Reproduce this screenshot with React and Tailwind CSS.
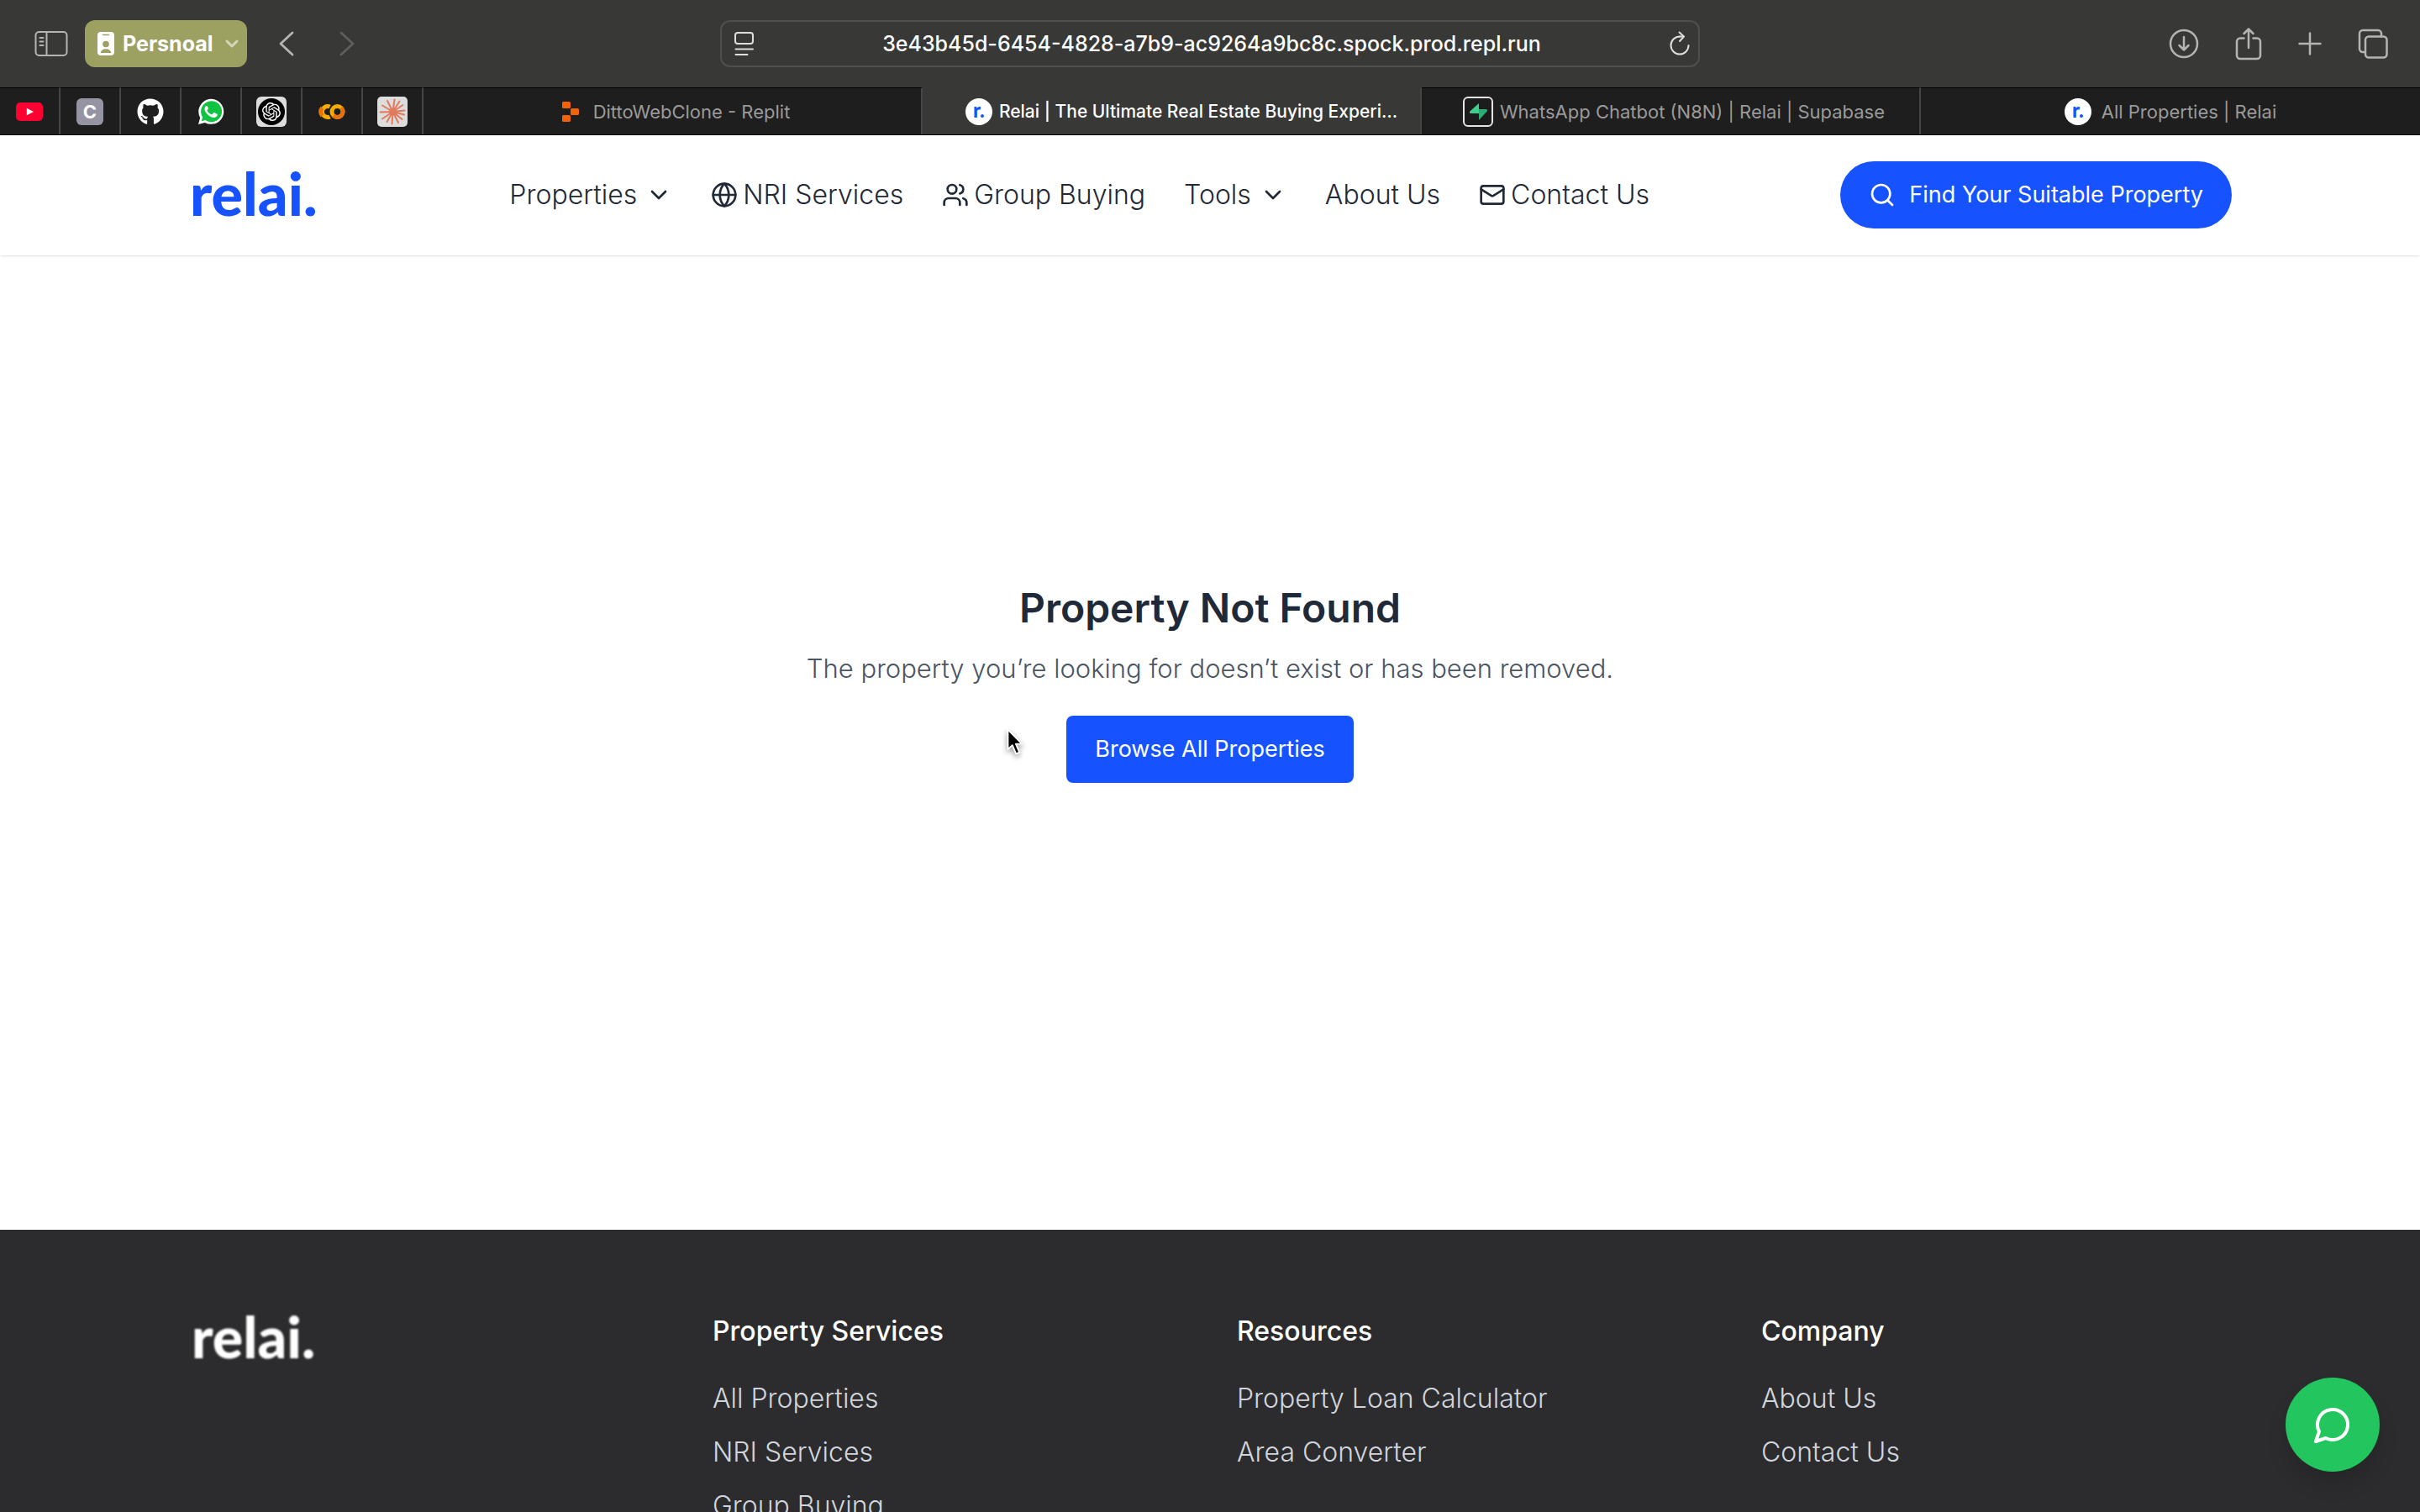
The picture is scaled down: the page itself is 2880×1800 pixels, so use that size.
import React from 'react';
import { ChevronDown, Globe, Users, Mail, Search } from 'lucide-react';
import { SiOpenai } from 'react-icons/si';
import { FaGithub } from 'react-icons/fa';

const line = {
  fill: 'none',
  stroke: 'currentColor',
  strokeLinecap: 'round',
  strokeLinejoin: 'round',
};

function SidebarIcon() {
  return (
    <svg width="40" height="32" viewBox="0 0 40 32" {...line} strokeWidth="2">
      <rect x="1.5" y="2" width="37" height="28" rx="4" />
      <path d="M14.5 2v28M6.5 9h4M6.5 13.500h4M6.500 18h4" />
    </svg>
  );
}

function BadgeIcon() {
  return (
    <svg width="20" height="28" viewBox="0 0 20 28">
      <rect width="20" height="28" rx="4" fill="#fff" />
      <path d="M6.500 3.500h7" stroke="#9ca162" strokeWidth="1.500" strokeLinecap="round" />
      <circle cx="10" cy="14.500" r="3.800" fill="#9ca162" />
      <path d="M3.500 25c.6-3.200 3.200-4.800 6.500-4.800s5.900 1.600 6.500 4.800z" fill="#9ca162" />
    </svg>
  );
}

function ReaderIcon() {
  return (
    <svg width="24" height="30" viewBox="0 0 24 30" {...line} strokeWidth="2">
      <rect x="1" y="2" width="21" height="13" rx="3" />
      <path d="M1.500 21.500h20.500M1.500 28h14" />
    </svg>
  );
}

function ReloadIcon() {
  return (
    <svg width="26" height="30" viewBox="0 0 26 30" {...line} strokeWidth="2">
      <path d="M13 6.500A10.500 10.500 0 1 0 23.500 17" />
      <path d="M12.500 1.500l5.500 5-5 5.500" />
      <path d="M13 6.500h4.500" />
    </svg>
  );
}

function DownloadIcon() {
  return (
    <svg width="36" height="36" viewBox="0 0 36 36" {...line} strokeWidth="2.500">
      <circle cx="18" cy="18" r="16" />
      <path d="M18 10v15.500M12.500 20l5.500 5.500 5.500-5.500" />
    </svg>
  );
}

function ShareIcon() {
  return (
    <svg width="32" height="40" viewBox="0 0 32 40" {...line} strokeWidth="2.500">
      <path d="M10.500 13.500H6a4 4 0 0 0-4 4V34a4 4 0 0 0 4 4h20a4 4 0 0 0 4-4V17.500a4 4 0 0 0-4-4h-4.500" />
      <path d="M16 25V2.500M10.500 8L16 2.500 21.500 8" />
    </svg>
  );
}

function PlusIcon() {
  return (
    <svg width="28" height="28" viewBox="0 0 28 28" {...line} strokeWidth="2.500">
      <path d="M14 1.500v25M1.500 14h25" />
    </svg>
  );
}

function TabsIcon() {
  return (
    <svg width="36" height="36" viewBox="0 0 36 36" {...line} strokeWidth="2.500">
      <rect x="9" y="9.500" width="25.500" height="25" rx="4" />
      <path d="M9 28H6a4 4 0 0 1-4-4V6a4 4 0 0 1 4-4h18a4 4 0 0 1 4 4v3.500" />
    </svg>
  );
}

function Caret({ forward }) {
  return (
    <svg width="18" height="30" viewBox="0 0 18 30" {...line} strokeWidth="2.800">
      {forward ? <path d="M2 2l14 13L2 28" /> : <path d="M16 2L2 15l14 13" />}
    </svg>
  );
}

function YoutubeMark() {
  return (
    <svg width="32" height="32" viewBox="0 0 32 32">
      <rect y="5" width="32" height="22" rx="5" fill="#ff0033" />
      <path d="M12.800 11.800v8.400l8.200-4.200z" fill="#fff" />
    </svg>
  );
}

function WhatsappMark() {
  return (
    <svg width="32" height="32" viewBox="0 0 32 32">
      <path d="M1 31l2.200-7.800A15 15 0 1 1 8.900 28.900z" fill="#fff" />
      <path d="M4.700 27.300l1.400-4.800A12.500 12.500 0 1 1 9.500 26z" fill="#10c441" />
      <path
        d="M11.300 8.900c-.5 0-1.100.2-1.500.7-.7.8-1.400 1.700-1.300 3.400.2 3.900 5.900 9.900 11.300 9.900 1.700 0 3.700-1.200 3.900-2.600.1-.9.100-1.300-.3-1.500l-3.500-1.700c-.4-.2-.7-.1-1 .3l-1.300 1.600c-.3.300-.6.400-1 .2-2.200-.9-3.900-2.500-5-4.500-.2-.4 0-.7.200-.9.500-.6 1.100-1.100 1.200-1.600 0-.4-1.200-3.200-1.700-3.300z"
        fill="#fff"
      />
    </svg>
  );
}

function ColabMark() {
  return (
    <svg width="32" height="32" viewBox="0 0 32 32" fill="none" strokeWidth="5">
      <path d="M13.600 10.100A6.500 6.500 0 1 0 13.600 21.900" stroke="#f9ab00" />
      <path d="M4.500 11.500A6.500 6.500 0 0 0 4.500 20.700" stroke="#e8710a" />
      <circle cx="22.500" cy="16" r="6.500" stroke="#f9ab00" />
      <path d="M27.100 11.400A6.500 6.500 0 0 1 17.900 20.600" stroke="#e8710a" />
    </svg>
  );
}

function ClaudeMark() {
  return (
    <svg width="36" height="36" viewBox="0 0 36 36">
      <rect width="36" height="36" rx="5" fill="#dddddd" />
      <g stroke="#e07a5c" strokeWidth="2" strokeLinecap="round">
        <path d="M18.500 18L20.500 3.500M18.500 18L26.500 5.500M18.500 18L30.500 10M18.500 18L32.500 16.500M18.500 18L32 21.500M18.500 18L29.500 27M18.500 18L25 31M18.500 18L17.500 32.500M18.500 18L11.500 30M18.500 18L6 26.500M18.500 18L3.500 18.500M18.500 18L6 10.500M18.500 18L12 5" />
      </g>
      <circle cx="18.500" cy="18" r="4.500" fill="#e07a5c" />
    </svg>
  );
}

function ReplitMark() {
  return (
    <svg width="22" height="24" viewBox="0 0 22 24" fill="#f26207">
      <rect x="1" y="0" width="10" height="8" rx="1.500" />
      <rect x="11" y="8" width="10" height="8" rx="1.500" />
      <rect x="1" y="16" width="10" height="8" rx="1.500" />
    </svg>
  );
}

function SupabaseMark() {
  return (
    <svg width="36" height="36" viewBox="0 0 36 36">
      <rect x="1" y="1" width="34" height="34" rx="5" fill="#1c1c1c" stroke="#e4e4e4" strokeWidth="2" />
      <path d="M19 8v12H9.500c-1.600 0-2-1.500-1.200-2.500z" fill="#3ecf8e" />
      <path d="M19 28V15h8.500c1.600 0 2 1.500 1.200 2.500z" fill="#2bae72" />
    </svg>
  );
}

function RelaiMark() {
  return (
    <span className="flex size-8 items-center justify-center rounded-full bg-white pb-1 font-['Lato',sans-serif] text-[24px] leading-6 font-black text-[#1752ff]">
      r.
    </span>
  );
}

const pinned = [
  { name: 'YouTube', icon: <YoutubeMark /> },
  {
    name: 'C',
    icon: (
      <span className="flex size-8 items-center justify-center rounded-md bg-[#9494a3] text-[22px] leading-8 font-bold text-white">
        C
      </span>
    ),
  },
  { name: 'GitHub', icon: <FaGithub size={32} color="#fff" /> },
  { name: 'WhatsApp', icon: <WhatsappMark /> },
  {
    name: 'ChatGPT',
    icon: (
      <span className="flex size-9 items-center justify-center rounded-md bg-[#dddddd]">
        <span className="flex size-8 items-center justify-center rounded-full bg-black">
          <SiOpenai size={22} color="#fff" />
        </span>
      </span>
    ),
  },
  { name: 'Colab', icon: <ColabMark /> },
  { name: 'Claude', icon: <ClaudeMark /> },
];

const tabs = [
  { title: 'DittoWebClone - Replit', icon: <ReplitMark />, gap: 'gap-4 pl-2' },
  {
    title: 'Relai | The Ultimate Real Estate Buying Experi…',
    icon: <RelaiMark />,
    gap: 'gap-2 pl-6',
    active: true,
  },
  { title: 'WhatsApp Chatbot (N8N) | Relai | Supabase', icon: <SupabaseMark />, gap: 'gap-2 pl-2' },
  { title: 'All Properties | Relai', icon: <RelaiMark />, gap: 'gap-3' },
];

function Browser() {
  return (
    <div className="relative z-10 -mb-px shrink-0">
      <div className="grid h-[104px] grid-cols-[1fr_1166px_1fr] items-center bg-[#383836] text-[#b4b4b2]">
        <div className="flex items-center pl-[41px]">
          <button aria-label="Sidebar"><SidebarIcon /></button>
          <button className="ml-5 flex h-14 w-[193px] items-center rounded-xl bg-[#9ca162] pl-[15px] text-white">
            <BadgeIcon />
            <span className="ml-[10px] text-[25px] leading-8 font-bold">Persnoal</span>
            <ChevronDown size={24} strokeWidth={3} className="mr-[6px] ml-auto text-[#d4d6b8]" />
          </button>
          <button aria-label="Back" className="ml-[38px]"><Caret /></button>
          <button aria-label="Forward" className="ml-[54px] text-[#5f5f5d]"><Caret forward /></button>
        </div>
        <div className="flex h-14 items-center rounded-xl border-2 border-[#4f4f4d] pr-[9px] pl-[15px] text-[#dededd]">
          <button aria-label="Page menu"><ReaderIcon /></button>
          <input
            aria-label="Address"
            className="min-w-0 flex-1 bg-transparent text-center text-[25px] leading-8 font-medium text-white outline-none"
            defaultValue="3e43b45d-6454-4828-a7b9-ac9264a9bc8c.spock.prod.repl.run"
          />
          <button aria-label="Reload"><ReloadIcon /></button>
        </div>
        <div className="flex items-center justify-end gap-[43px] pr-[38px]">
          <button aria-label="Downloads"><DownloadIcon /></button>
          <button aria-label="Share"><ShareIcon /></button>
          <button aria-label="New tab"><PlusIcon /></button>
          <button aria-label="Tab overview"><TabsIcon /></button>
        </div>
      </div>
      <div className="flex h-[57px] border-b border-black bg-[#1e1e1e]">
        {pinned.map((p) => (
          <button
            key={p.name}
            aria-label={p.name}
            className="flex w-[72px] shrink-0 items-center justify-center border-t border-r-2 border-t-black border-r-[#464646]"
          >
            {p.icon}
          </button>
        ))}
        <div className="grid flex-1 grid-cols-4">
          {tabs.map((t) => (
            <button
              key={t.title}
              className={`flex min-w-0 items-center justify-center border-t border-r-2 leading-7 last:border-r-0 ${t.gap} ${
                t.active
                  ? 'border-t-[#383836] border-r-[#464646] bg-[#383836] text-[21px] font-medium text-white'
                  : 'border-t-black border-r-[#464646] text-[22px] text-[#9a9a9a]'
              }`}
            >
              {t.icon}
              <span className="whitespace-nowrap">{t.title}</span>
            </button>
          ))}
        </div>
      </div>
    </div>
  );
}

function Header() {
  return (
    <header className="relative h-36 shrink-0 bg-white shadow-sm">
      <div className="mx-auto flex h-full max-w-[2432px] items-center justify-between">
        <a href="#" className="w-[155px] pb-1 pl-[2px] font-['Lato',sans-serif] text-[70px] leading-[80px] font-black text-[#1752ff]">
          relai.
        </a>
        <nav className="flex items-center gap-[46px] text-[32px] leading-12 font-light text-[#1f2937]">
          <button className="flex items-center gap-[10px]">
            Properties <ChevronDown size={32} />
          </button>
          <a href="#" className="flex items-center gap-[6px]">
            <Globe size={32} /> NRI Services
          </a>
          <a href="#" className="flex items-center gap-[6px]">
            <Users size={32} /> Group Buying
          </a>
          <button className="flex items-center gap-[10px]">
            Tools <ChevronDown size={32} />
          </button>
          <a href="#">About Us</a>
          <a href="#" className="flex items-center gap-[6px]">
            <Mail size={32} /> Contact Us
          </a>
        </nav>
        <button className="flex h-20 items-center gap-4 rounded-full bg-[#1752ff] px-[34px] text-[27px] leading-10 text-white">
          <Search size={32} /> Find Your Suitable Property
        </button>
      </div>
    </header>
  );
}

const columns = [
  { title: 'Property Services', links: ['All Properties', 'NRI Services', 'Group Buying'] },
  { title: 'Resources', links: ['Property Loan Calculator', 'Area Converter'] },
  { title: 'Company', links: ['About Us', 'Contact Us'] },
];

function Footer() {
  return (
    <footer className="shrink-0 bg-[#2c2c2e] pt-[97px] pb-24 text-[32px] leading-12">
      <div className="mx-auto grid max-w-[2432px] grid-cols-4 gap-16">
        <a href="#" className="pl-1 font-['Lato',sans-serif] text-[68px] leading-[60px] font-black text-white blur-[1px]">
          relai.
        </a>
        {columns.map((c) => (
          <div key={c.title}>
            <h3 className="mb-8 font-medium text-white">{c.title}</h3>
            <ul className="flex flex-col gap-4 font-light text-[#d1d5db]">
              {c.links.map((l) => (
                <li key={l}>
                  <a href="#">{l}</a>
                </li>
              ))}
            </ul>
          </div>
        ))}
      </div>
    </footer>
  );
}

export default function App() {
  return (
    <div className="relative flex h-screen flex-col overflow-hidden bg-white font-['Inter',sans-serif]">
      <Browser />
      <div className="flex min-h-0 flex-1 flex-col overflow-hidden">
        <Header />
        <main className="flex min-h-[1160px] shrink-0 flex-col items-center justify-center pb-36 text-center">
          <h1 className="mb-4 text-[48px] leading-16 font-semibold text-[#1f2937]">Property Not Found</h1>
          <p className="mb-8 text-[31px] leading-12 font-light text-[#4b5563]">
            The property you’re looking for doesn’t exist or has been removed.
          </p>
          <button className="h-20 rounded-lg bg-[#1752ff] px-[34px] text-[27px] leading-10 text-white">
            Browse All Properties
          </button>
        </main>
        <Footer />
      </div>
      <button
        aria-label="Chat"
        className="absolute right-12 bottom-12 flex size-28 items-center justify-center rounded-full bg-[#22c55e] text-white shadow-[0_16px_24px_rgba(0,0,0,0.12)]"
      >
        <svg width="48" height="48" viewBox="0 0 24 24" {...line} strokeWidth="2">
          <path d="M7.900 20A9 9 0 1 0 4 16.100L2 22Z" />
        </svg>
      </button>
      <svg
        className="pointer-events-none absolute top-[866px] left-[1197px] drop-shadow-[0_3px_3px_rgba(0,0,0,0.400)]"
        width="24"
        height="36"
        viewBox="0 0 24 36"
      >
        <path
          d="M2.500 2.500v23.500l5.300-4.900 4.400 10.300 4-1.700-4.300-10.100h7.300z"
          fill="#000"
          stroke="#fff"
          strokeWidth="1.800"
          strokeLinejoin="round"
        />
      </svg>
    </div>
  );
}
